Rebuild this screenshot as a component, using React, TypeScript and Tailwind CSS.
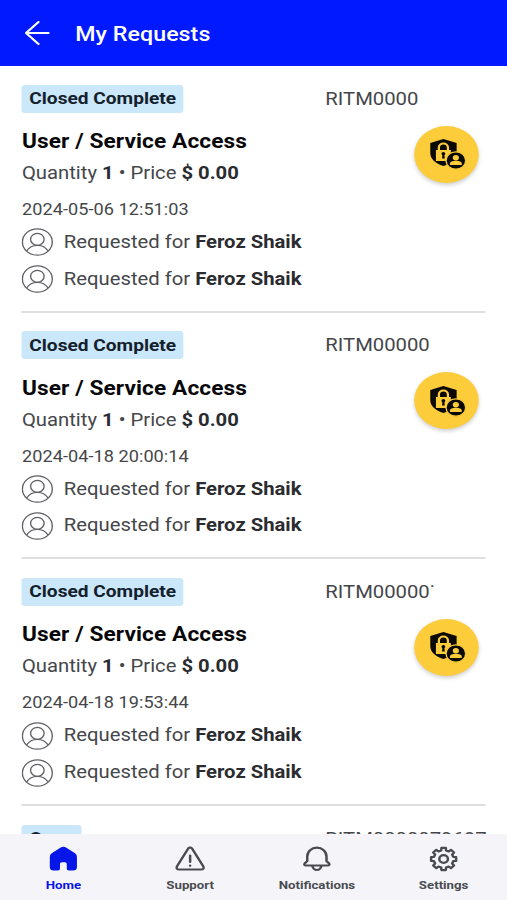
import type { ReactNode } from 'react'

interface RequestItem {
  status: string
  number: string
  title: string
  date: string
  person: string
}

const requests: RequestItem[] = [
  { status: 'Closed Complete', number: 'RITM0000', title: 'User / Service Access', date: '2024-05-06 12:51:03', person: 'Feroz Shaik' },
  { status: 'Closed Complete', number: 'RITM00000', title: 'User / Service Access', date: '2024-04-18 20:00:14', person: 'Feroz Shaik' },
  { status: 'Closed Complete', number: 'RITM00000˙', title: 'User / Service Access', date: '2024-04-18 19:53:44', person: 'Feroz Shaik' },
]

// Eight teeth around the centre of a 28x28 box
const gearPoints = Array.from({ length: 8 }, (_, i) => i * 45)
  .flatMap((deg) => [
    [deg - 14, 8.8],
    [deg - 10, 11.2],
    [deg + 10, 11.2],
    [deg + 14, 8.8],
  ])
  .map(([deg, r]) => {
    const a = (deg * Math.PI) / 180
    return `${(14 + r * Math.cos(a)).toFixed(2)},${(14 + r * Math.sin(a)).toFixed(2)}`
  })
  .join(' ')

function PersonIcon() {
  return (
    <svg viewBox="0 0 28 28" className="size-7 shrink-0" fill="none" stroke="#606165" strokeWidth="1.2">
      <circle cx="14" cy="14" r="13.2" />
      <circle cx="14" cy="11.3" r="6" />
      <path d="M4.500 23c2.200-3.900 5.600-5.700 9.500-5.700s7.300 1.800 9.500 5.700" />
    </svg>
  )
}

function AccessIcon() {
  return (
    <svg viewBox="0 0 32 32" className="size-8">
      <path d="M12.8 1 24.5 5v10c0 6-4.500 10.500-11.700 13C5.600 25.500 1.200 21 1.200 15V5z" fill="#0b0903" />
      <path d="M8.800 12V9.500a4 4 0 0 1 8 0V12" fill="none" stroke="#fccc3a" strokeWidth="2" />
      <rect x="6.200" y="12" width="13.200" height="11" fill="#fccc3a" />
      <circle cx="12.800" cy="15.800" r="1.700" fill="#0b0903" />
      <path d="M12 16h1.600l.4 4.500h-2.400z" fill="#0b0903" />
      <circle cx="23.800" cy="22.500" r="8.700" fill="#0b0903" stroke="#fccc3a" strokeWidth="1.200" />
      <circle cx="23.800" cy="19.800" r="2.700" fill="#fccc3a" />
      <path d="M18.600 27v-1.400c0-2 2-2.800 5.200-2.800s5.200.8 5.200 2.800V27z" fill="#fccc3a" />
    </svg>
  )
}

function RequestedFor({ name }: { name: string }) {
  return (
    <div className="flex h-[36.800px] items-center gap-[9px]">
      <PersonIcon />
      <p className="text-[17.900px] text-[#454649]">
        Requested for <span className="font-bold text-[#2b2c30]">{name}</span>
      </p>
    </div>
  )
}

function RequestTop({ status, number }: { status: string; number: string }) {
  return (
    <div className="flex h-[46.500px] shrink-0 items-end justify-between">
      <span className="flex h-7 items-center rounded-[3px] bg-[#cbe7fa] px-[6.500px] text-[16.900px] font-bold text-[#14212d]">
        {status}
      </span>
      <span className="flex h-7 w-[141.500px] items-center pt-px text-[17.900px] whitespace-nowrap text-[#454649]">{number}</span>
    </div>
  )
}

function RequestCard({ item }: { item: RequestItem }) {
  return (
    <article className="h-[246.700px] shrink-0 border-b-2 border-[#dedee0]">
      <RequestTop status={item.status} number={item.number} />
      <div className="flex justify-between">
        <div className="pt-[14.500px]">
          <h2 className="text-[20px] leading-[28px] font-bold tracking-[0.1px] text-[#08080a]">{item.title}</h2>
          <p className="mt-1 text-[17.900px] leading-[28px] text-[#454649]">
            Quantity <b className="text-[#2b2c30]">1</b> • Price <b className="text-[#2b2c30]">$ 0.00</b>
          </p>
        </div>
        <div className="mt-[13px] mr-1.5 flex size-[57px] items-center justify-center rounded-full bg-[#fccc3a] shadow-[0_2px_4px_rgba(0,0,0,0.2)]">
          <AccessIcon />
        </div>
      </div>
      <p className="mt-[13px] text-[16px] leading-[20px] tracking-[0.05px] text-[#454649]">{item.date}</p>
      <div className="mt-[4px]">
        <RequestedFor name={item.person} />
        <RequestedFor name={item.person} />
      </div>
    </article>
  )
}

function Tab({ label, active, children }: { label: string; active?: boolean; children: ReactNode }) {
  return (
    <button className={`flex flex-1 flex-col items-center pt-[11px] ${active ? 'text-[#0716e8]' : 'text-[#4a4b50]'}`}>
      <svg viewBox="0 0 28 28" className="size-7" fill="none" stroke="currentColor" strokeWidth="2.2" strokeLinejoin="round" strokeLinecap="round">
        {children}
      </svg>
      <span className="mt-[3.500px] text-[11.700px] leading-4 font-bold">{label}</span>
    </button>
  )
}

export default function App() {
  return (
    <div className="h-[900px] w-[507px] overflow-hidden bg-white">
      <div className="flex h-[900px] w-[448px] origin-top-left scale-x-[1.1317] flex-col font-['Roboto',sans-serif]">
        <header className="flex h-[66px] shrink-0 items-center gap-[23px] bg-[#0019ff] pl-[21.500px] text-white">
          <svg viewBox="0 0 22 24" className="h-6 w-[22px]" fill="none" stroke="currentColor" strokeWidth="2" strokeLinecap="round" strokeLinejoin="round">
            <path d="M21 12H1M12 1 1 12l11 11" />
          </svg>
          <h1 className="pt-0.5 text-[20.500px] font-medium tracking-[0.050px]">My Requests</h1>
        </header>
        <main className="flex min-h-0 flex-1 flex-col overflow-hidden pr-[19px] pl-[19.400px]">
          {requests.map((item) => (
            <RequestCard key={item.date} item={item} />
          ))}
          <RequestTop status="Open" number="RITM0000079687" />
        </main>
        <nav className="flex h-[66px] shrink-0 bg-[#f5f5f9]">
          <Tab label="Home" active>
            <path d="M3.700 8.200 11.300 2.700Q14 .7 16.700 2.700L24.300 8.200Q26 9.500 26 12v10q0 3.500-3.500 3.500h-3.800q-1.700 0-1.700-1.700V19q0-1.700-1.700-1.700h-2.600Q11 17.300 11 19v4.800q0 1.700-1.700 1.700H5.500Q2 25.500 2 22V12Q2 9.500 3.700 8.200z" fill="currentColor" stroke="none" />
          </Tab>
          <Tab label="Support">
            <path d="M12.300 3.500 2.300 21.500Q1.300 24.500 4.300 24.500h19.400q3 0 2-3L15.700 3.500q-1.700-2-3.400 0zM14 10.500v6.500M14 20.600v.2" />
          </Tab>
          <Tab label="Notifications">
            <path d="M5.500 11.500a8.500 8.800 0 0 1 17 0v4.500l2.300 2.500q1 2-1.300 2h-19q-2.300 0-1.300-2L5.500 16zM10 21q1 4 4 4t4-4" />
          </Tab>
          <Tab label="Settings">
            <circle cx="14" cy="14" r="3.800" />
            <polygon points={gearPoints} />
          </Tab>
        </nav>
      </div>
    </div>
  )
}
